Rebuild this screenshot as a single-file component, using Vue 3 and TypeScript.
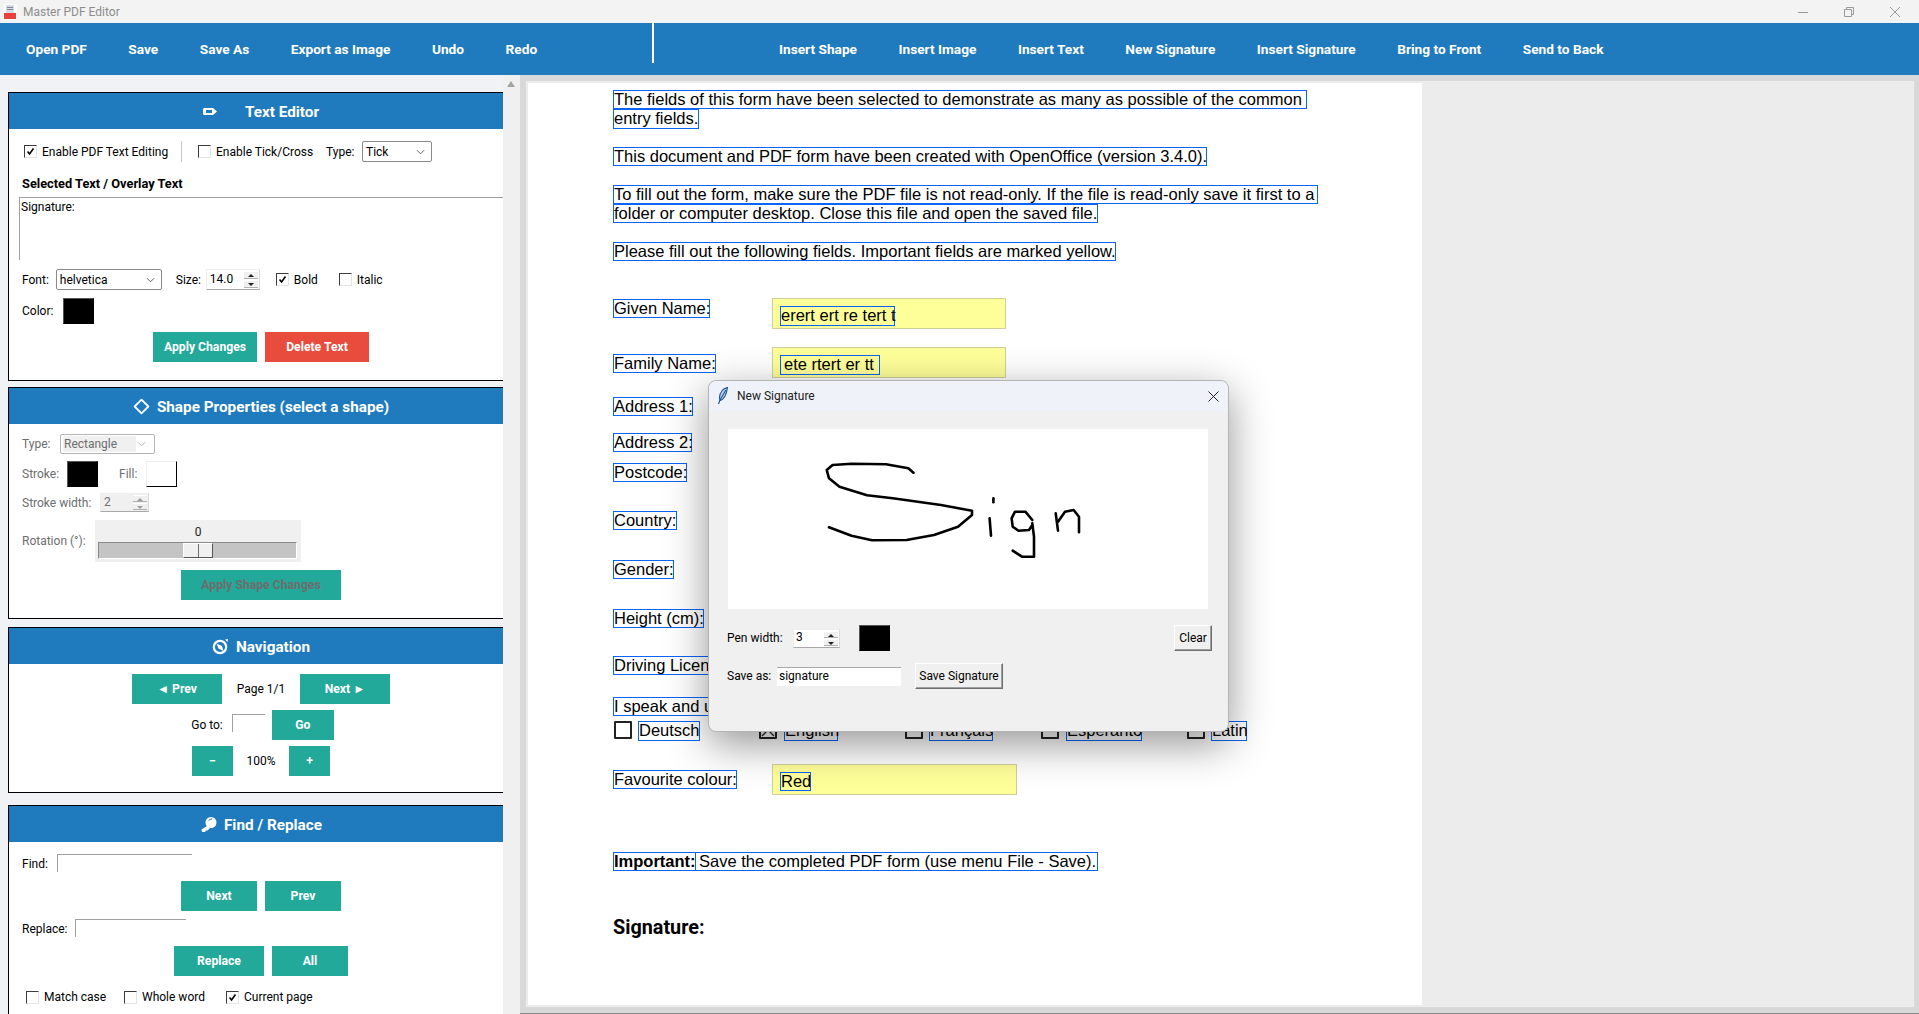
<script setup lang="ts">
interface Box { x: number; y: number; w: number; h: number; text: string; bold?: boolean; pad?: number }
interface Rect { x: number; y: number; w: number; h: number; mark?: boolean }

const OX = 528
const OY = 83
const place = (r: { x: number; y: number; w: number; h: number }) => ({
  left: `${r.x - OX}px`,
  top: `${r.y - OY}px`,
  width: `${r.w}px`,
  height: `${r.h}px`,
})

const tools1 = ['Open PDF', 'Save', 'Save As', 'Export as Image', 'Undo', 'Redo']
const tools2 = ['Insert Shape', 'Insert Image', 'Insert Text', 'New Signature', 'Insert Signature', 'Bring to Front', 'Send to Back']

const fields: Rect[] = [
  { x: 772, y: 298, w: 234, h: 31 },
  { x: 772, y: 347, w: 234, h: 31 },
  { x: 772, y: 764, w: 245, h: 31 },
]

const boxes: Box[] = [
  { x: 613, y: 90, w: 694, h: 19, text: 'The fields of this form have been selected to demonstrate as many as possible of the common' },
  { x: 613, y: 109, w: 86, h: 20, text: 'entry fields.' },
  { x: 613, y: 147, w: 594, h: 19, text: 'This document and PDF form have been created with OpenOffice (version 3.4.0).' },
  { x: 613, y: 185, w: 705, h: 19, text: 'To fill out the form, make sure the PDF file is not read-only. If the file is read-only save it first to a' },
  { x: 613, y: 204, w: 485, h: 19, text: 'folder or computer desktop. Close this file and open the saved file.' },
  { x: 613, y: 242, w: 503, h: 19, text: 'Please fill out the following fields. Important fields are marked yellow.' },
  { x: 613, y: 299, w: 97, h: 19, text: 'Given Name:' },
  { x: 780, y: 306, w: 115, h: 20, text: 'erert ert re tert t' },
  { x: 613, y: 354, w: 103, h: 19, text: 'Family Name:' },
  { x: 780, y: 355, w: 100, h: 20, text: 'ete rtert er tt', pad: 3 },
  { x: 613, y: 397, w: 80, h: 19, text: 'Address 1:' },
  { x: 613, y: 433, w: 79, h: 19, text: 'Address 2:' },
  { x: 613, y: 463, w: 74, h: 19, text: 'Postcode:' },
  { x: 613, y: 511, w: 64, h: 19, text: 'Country:' },
  { x: 613, y: 560, w: 61, h: 19, text: 'Gender:' },
  { x: 613, y: 609, w: 91, h: 19, text: 'Height (cm):' },
  { x: 613, y: 656, w: 130, h: 19, text: 'Driving License:' },
  { x: 613, y: 697, w: 360, h: 19, text: 'I speak and understand (tick as many as apply):' },
  { x: 638, y: 721, w: 62, h: 20, text: 'Deutsch' },
  { x: 784, y: 721, w: 54, h: 20, text: 'English' },
  { x: 929, y: 721, w: 64, h: 20, text: 'Français' },
  { x: 1066, y: 721, w: 76, h: 20, text: 'Esperanto' },
  { x: 1211, y: 721, w: 36, h: 20, text: 'Latin' },
  { x: 613, y: 770, w: 124, h: 19, text: 'Favourite colour:' },
  { x: 780, y: 772, w: 31, h: 19, text: 'Red' },
  { x: 613, y: 852, w: 83, h: 19, text: 'Important:', bold: true },
  { x: 695, y: 852, w: 403, h: 19, text: 'Save the completed PDF form (use menu File - Save).', pad: 3 },
]

const pdfChecks: Rect[] = [
  { x: 614, y: 721, w: 18, h: 18 },
  { x: 759, y: 721, w: 18, h: 18, mark: true },
  { x: 905, y: 721, w: 18, h: 18 },
  { x: 1041, y: 721, w: 18, h: 18 },
  { x: 1187, y: 721, w: 18, h: 18 },
]

const strokes = [
  'M185.5 43.7 L180.3 39.3 L158 35.3 L123.5 34.7 L104.6 36 L98.7 41 L101 49.3 L111.5 57.7 L139 66.3 L164.8 69.3 L213 76 L244 81.7 L244 86 L230 97.7 L206 106 L178.6 111 L144 111.3 L123.5 106.7 L101 98.3',
  'M261.6 89.3 L263 106.7',
  'M265.4 69.3 L265.4 73.3',
  'M304.3 91 L297.4 82.7 L287 82.7 L283.6 89.3 L284.7 97.7 L290.5 101.7 L301 101 L304.3 96 M304.3 94.3 L306 107.7 L306 127.7 L294 127.7 L284.7 121.7',
  'M327.7 84.3 L330 101.7 M330 92.7 L337 82.7 L345.6 81 L351 87.7 L351 103.3',
]
</script>

<template>
  <div class="app">
    <header class="titlebar">
      <svg class="appicon" viewBox="0 0 14 16" width="14" height="16">
        <rect x="0" y="0" width="14" height="16" fill="#fbfbfb" />
        <rect x="3" y="1" width="8" height="8" fill="#d8dbe2" />
        <rect x="4" y="3" width="6" height="1" fill="#7d8594" />
        <rect x="4" y="5" width="6" height="1" fill="#7d8594" />
        <rect x="1" y="9" width="12" height="6" fill="#e8413a" />
      </svg>
      <span class="apptitle">Master PDF Editor</span>
      <div class="winbtns">
        <svg width="10" height="10" viewBox="0 0 10 10"><path d="M0 5.5H10" stroke="#999" fill="none" /></svg>
        <svg width="10" height="10" viewBox="0 0 10 10"><path d="M.5 2.5h7v7h-7zM2.5 2.5v-2h7v7h-2" stroke="#999" fill="none" /></svg>
        <svg width="10" height="10" viewBox="0 0 10 10"><path d="M0 0L10 10M10 0L0 10" stroke="#999" fill="none" /></svg>
      </div>
    </header>

    <nav class="toolbar">
      <div class="toolgroup first">
        <span v-for="t in tools1" :key="t">{{ t }}</span>
      </div>
      <i class="toolsep"></i>
      <div class="toolgroup second">
        <span v-for="t in tools2" :key="t">{{ t }}</span>
      </div>
    </nav>

    <main class="work">
      <aside class="side">
        <section class="panel p1">
          <h2 class="phead gap-wide">
            <svg width="14" height="7" viewBox="0 0 14 7"><path d="M1 0H10L14 3.5L10 7H1L0 6V1Z" fill="#fff" /><rect x="3" y="2" width="6" height="3" fill="#1f7bbd" /></svg>
            <span>Text Editor</span>
          </h2>
          <div class="row r1">
            <span class="cb"><svg viewBox="0 0 13 13"><path d="M3 6.5L5.4 9.5L10 3" /></svg></span>
            <span class="ml5 wlab1">Enable PDF Text Editing</span>
            <i class="vsep"></i>
            <span class="cb ml16"></span>
            <span class="ml5 wlab2">Enable Tick/Cross</span>
            <span class="ml16b">Type:</span>
            <span class="combo w70"><span>Tick</span><svg viewBox="0 0 10 6"><path d="M1 1L5 5L9 1" /></svg></span>
          </div>
          <div class="seltitle">Selected Text / Overlay Text</div>
          <div class="textarea">Signature:</div>
          <div class="row r3">
            <span class="lab22">Font:</span>
            <span class="combo w106 font"><span>helvetica</span><svg viewBox="0 0 10 6"><path d="M1 1L5 5L9 1" /></svg></span>
            <span class="sizelab">Size:</span>
            <span class="spin w54">
              <span>14.0</span>
              <span class="arrows"><b class="up"></b><b class="dn"></b></span>
            </span>
            <span class="cb bold"><svg viewBox="0 0 13 13"><path d="M3 6.5L5.4 9.5L10 3" /></svg></span>
            <span class="ml5 wbold">Bold</span>
            <span class="cb"></span>
            <span class="ml5">Italic</span>
          </div>
          <div class="row r4">
            <span class="lab22 wcolor">Color:</span>
            <span class="swatch"></span>
          </div>
          <div class="btnrow r5">
            <button class="btn w104">Apply Changes</button>
            <button class="btn red w104">Delete Text</button>
          </div>
        </section>

        <section class="panel p2">
          <h2 class="phead">
            <svg width="17" height="17" viewBox="0 0 17 17"><path d="M8.5 1.6L15.4 8.5L8.5 15.4L1.6 8.5Z" fill="none" stroke="#fff" stroke-width="1.8" stroke-linejoin="round" /></svg>
            <span>Shape Properties (select a shape)</span>
          </h2>
          <div class="row dis rt">
            <span class="lab22 wt">Type:</span>
            <span class="combo w95 disabled"><span class="dval">Rectangle</span><svg viewBox="0 0 10 6"><path d="M1 1L5 5L9 1" /></svg></span>
          </div>
          <div class="row dis rs">
            <span class="lab22 wst">Stroke:</span>
            <span class="swatch"></span>
            <span class="filllab">Fill:</span>
            <span class="swatch white"></span>
          </div>
          <div class="row dis rw">
            <span class="lab22 wsw">Stroke width:</span>
            <span class="spin w49 disabled">
              <span>2</span>
              <span class="arrows"><b class="up"></b><b class="dn"></b></span>
            </span>
          </div>
          <div class="row dis rr">
            <span class="lab22 wrot">Rotation (°):</span>
            <div class="scale">
              <span class="scaleval">0</span>
              <div class="trough"><i class="thumb"></i></div>
            </div>
          </div>
          <div class="btnrow r6">
            <button class="btn w160 disbtn">Apply Shape Changes</button>
          </div>
        </section>

        <section class="panel p3">
          <h2 class="phead">
            <svg width="17" height="17" viewBox="0 0 17 17">
              <circle cx="8" cy="9" r="6.2" fill="none" stroke="#fff" stroke-width="2.2" />
              <path d="M4.5 5.5L10 8L11.5 13L6.5 10.5Z" fill="#fff" />
              <path d="M13 1.5L16 1L15.5 4Z" fill="#fff" />
            </svg>
            <span>Navigation</span>
          </h2>
          <div class="btnrow n1">
            <button class="btn w90">◄ Prev</button>
            <span class="pagelab">Page 1/1</span>
            <button class="btn w90">Next ►</button>
          </div>
          <div class="btnrow n2 goto">
            <span>Go to:</span>
            <span class="entry e33"></span>
            <button class="btn w62">Go</button>
          </div>
          <div class="btnrow n2">
            <button class="btn w41">−</button>
            <span class="zoomlab">100%</span>
            <button class="btn w41">+</button>
          </div>
        </section>

        <section class="panel p4">
          <h2 class="phead">
            <svg width="17" height="15" viewBox="0 0 17 15">
              <circle cx="11" cy="5.5" r="5.5" fill="#fff" />
              <path d="M7 9L1.5 12.5L2 15H5L6 13.5H7.5L10 11Z" fill="#fff" />
              <path d="M8.5 3.5Q10 1.8 12 2" stroke="#1f7bbd" stroke-width="1" fill="none" />
            </svg>
            <span>Find / Replace</span>
          </h2>
          <div class="row f1">
            <span class="lab22 wfind">Find:</span>
            <span class="entry e135"></span>
          </div>
          <div class="btnrow f2">
            <button class="btn w76">Next</button>
            <button class="btn w76">Prev</button>
          </div>
          <div class="row f3">
            <span class="lab22 wrep">Replace:</span>
            <span class="entry e111"></span>
          </div>
          <div class="btnrow f2">
            <button class="btn w90">Replace</button>
            <button class="btn w76">All</button>
          </div>
          <div class="row f5">
            <span class="cb"></span>
            <span class="ml5 wmc">Match case</span>
            <span class="cb"></span>
            <span class="ml5 wmw">Whole word</span>
            <span class="cb"><svg viewBox="0 0 13 13"><path d="M3 6.5L5.4 9.5L10 3" /></svg></span>
            <span class="ml5">Current page</span>
          </div>
        </section>
      </aside>

      <div class="vscroll"><i class="uparrow"></i></div>

      <div class="viewport">
        <div class="frame">
          <div class="page">
            <div v-for="(f, i) in fields" :key="'f' + i" class="pfield" :style="place(f)"></div>
            <div v-for="(c, i) in pdfChecks" :key="'c' + i" class="pcheck" :style="place(c)">
              <svg v-if="c.mark" viewBox="0 0 14 14"><path d="M1 1L13 13M13 1L1 13" /></svg>
            </div>
            <div
              v-for="b in boxes"
              :key="b.text"
              class="tbox"
              :class="{ strong: b.bold }"
              :style="{ ...place(b), paddingLeft: `${b.pad ?? 0}px` }"
            >{{ b.text }}</div>
            <div class="psign">Signature:</div>
          </div>
        </div>
      </div>
    </main>

    <div class="dialog">
      <div class="dtitle">
        <svg width="12" height="18" viewBox="0 0 12 18">
          <path d="M10.5 .5C6 1.5 3 5.5 2.5 10.5L3 13.5C7 12.5 9.5 8 10.5 .5Z" fill="#bcd3ef" stroke="#1d4f8f" stroke-width="1.1" />
          <path d="M9 3L3 13L1.5 17" fill="none" stroke="#1d4f8f" stroke-width="1.1" />
        </svg>
        <span class="dname">New Signature</span>
        <svg class="dclose" width="11" height="11" viewBox="0 0 11 11"><path d="M.5 .5L10.5 10.5M10.5 .5L.5 10.5" stroke="#222" stroke-width="1" fill="none" /></svg>
      </div>
      <div class="sigpad">
        <svg width="480" height="180" viewBox="0 0 480 180">
          <path v-for="(d, i) in strokes" :key="i" :d="d" fill="none" stroke="#000" stroke-width="2.6" stroke-linejoin="round" stroke-linecap="round" />
        </svg>
      </div>
      <div class="drow d1">
        <span class="wpen">Pen width:</span>
        <span class="spin w47 dspin">
          <span>3</span>
          <span class="arrows"><b class="up"></b><b class="dn"></b></span>
        </span>
        <span class="swatch dsw"></span>
        <button class="tkbtn clear">Clear</button>
      </div>
      <div class="drow d2">
        <span class="wsave">Save as:</span>
        <span class="dentry">signature</span>
        <button class="tkbtn save">Save Signature</button>
      </div>
    </div>
  </div>
</template>

<style scoped>
.app {
  position: relative;
  width: 1919px;
  height: 1014px;
  overflow: hidden;
  display: flex;
  flex-direction: column;
  font-family: Roboto, "Liberation Sans", sans-serif;
  font-size: 12px;
  color: #000;
  background: #f0f2f6;
}

.titlebar {
  height: 23px;
  flex: none;
  display: flex;
  align-items: center;
  background: #f3f3f3;
  padding-left: 3px;
}
.appicon { flex: none; }
.apptitle { margin-left: 6px; color: #8c8c8c; font-size: 12px; }
.winbtns {
  margin-left: auto;
  display: flex;
  gap: 36px;
  padding-right: 19px;
  align-items: center;
}

.toolbar {
  height: 52px;
  flex: none;
  display: flex;
  align-items: center;
  background: #1f7bbd;
  color: #fff;
  font-weight: 700;
  font-size: 13.7px;
}
.toolgroup { display: flex; white-space: nowrap; }
.toolgroup.first { gap: 41.5px; margin-left: 26px; width: 626px; }
.toolsep { width: 2px; height: 40px; background: #fff; margin-top: -12px; align-self: center; }
.toolgroup.second { gap: 41.5px; margin-left: 125px; }

.work { flex: 1; display: flex; min-height: 0; }

.side {
  width: 503px;
  flex: none;
  overflow: hidden;
  padding: 17px 0 0 8px;
  box-sizing: border-box;
}
.panel {
  width: 506px;
  box-sizing: border-box;
  border: 1px solid #000;
  background: #fff;
}
.p1 { height: 289px; }
.p2 { height: 232px; margin-top: 6px; }
.p3 { height: 166px; margin-top: 8px; }
.p4 { height: 240px; margin-top: 12px; }

.phead {
  margin: 0;
  height: 36px;
  display: flex;
  align-items: center;
  justify-content: center;
  gap: 7px;
  background: #1f7bbd;
  color: #fff;
  font-size: 15.3px;
  font-weight: 700;
  padding-top: 1px;
  box-sizing: border-box;
}
.gap-wide { gap: 28px; }

.row { display: flex; align-items: center; padding-left: 13px; white-space: nowrap; }
.btnrow { display: flex; align-items: center; justify-content: center; white-space: nowrap; }
.row > span { flex: none; }

.cb {
  width: 13px;
  height: 13px;
  box-sizing: border-box;
  flex: none;
  border: 1px solid;
  border-color: #3c3c3c #e4e4e4 #e4e4e4 #3c3c3c;
  background: #fff;
  display: block;
}
.cb svg { display: block; width: 11px; height: 11px; }
.cb svg path { fill: none; stroke: #000; stroke-width: 1.9; }
.ml5 { margin-left: 5px; }

.r1 { margin-top: 12px; height: 21px; padding-left: 15px; }
.wlab1 { width: 124px; }
.vsep { width: 1px; height: 21px; background: #c8c8c8; margin-left: 15px; flex: none; }
.ml16 { margin-left: 16px; }
.wlab2 { width: 94px; }
.ml16b { margin-left: 16px; width: 36px; }

.combo {
  box-sizing: border-box;
  display: flex;
  align-items: center;
  justify-content: space-between;
  height: 21px;
  padding: 0 6px 0 3px;
  background: #fff;
  border: 1px solid #8a8a8a;
  border-radius: 2px;
  flex: none;
}
.combo svg { width: 9px; height: 6px; }
.combo svg path { fill: none; stroke: #555; stroke-width: 1; }
.combo.disabled {
  border-color: #b5b5b5;
  height: 20px;
  padding: 1px 8px 1px 2px;
}
.dval { background: #f0f0f0; align-self: stretch; display: flex; align-items: center; width: 72px; padding-left: 1px; }
.combo.disabled svg path { stroke: #aaa; }
.w70 { width: 70px; }
.w106 { width: 106px; }
.w95 { width: 95px; }

.seltitle { margin: 12px 0 0 13px; height: 18px; line-height: 20px; font-weight: 700; font-size: 12.8px; }
.textarea {
  margin: 5px 0 0 10px;
  height: 63px;
  border-top: 1px solid #a0a0a0;
  border-left: 1px solid #a0a0a0;
  box-sizing: border-box;
  padding: 2px 0 0 1px;
}

.r3 { margin-top: 9px; height: 21px; }
.lab22 { flex: none; }
.font { margin-left: 7px; }
.sizelab { margin-left: 14px; width: 30px; }
.spin {
  position: relative;
  box-sizing: border-box;
  height: 21px;
  display: flex;
  align-items: center;
  padding: 0 0 2px 3px;
  background: #fff;
  border-right: 1px solid #d8d8d8;
  border-bottom: 1px solid #a8a8a8;
  border-top: 1px solid #eee;
  border-left: 1px solid #eee;
  flex: none;
}
.w54 { width: 54px; }
.w49 { width: 49px; height: 19px; }
.w47 { width: 47px; height: 19px; }
.spin.disabled { background: #f0f0f0; }
.arrows {
  position: absolute;
  right: 1px;
  top: 1px;
  bottom: 1px;
  width: 14px;
  display: flex;
  flex-direction: column;
  gap: 1px;
}
.arrows b {
  flex: 1;
  position: relative;
  background: #f0f0f0;
  border-bottom: 1px solid #b0b0b0;
  border-top: 1px solid #fff;
}
.arrows b::after {
  content: "";
  position: absolute;
  left: 4px;
  top: 2px;
  border-left: 3px solid transparent;
  border-right: 3px solid transparent;
}
.arrows .up::after { border-bottom: 3px solid #222; }
.arrows .dn::after { border-top: 3px solid #222; }
.disabled .arrows .up::after { border-bottom-color: #9b9b9b; }
.disabled .arrows .dn::after { border-top-color: #9b9b9b; }

.bold { margin-left: 16px; }
.wbold { width: 45px; }

.r4 { margin-top: 8px; height: 26px; }
.wcolor { width: 41px; }
.swatch {
  display: block;
  width: 31px;
  height: 26px;
  box-sizing: border-box;
  flex: none;
  background: #000;
  border: 1px solid;
  border-color: #555 #000 #000 #555;
}
.swatch.white { background: #fff; border-color: #eee #000 #000 #eee; }

.btn {
  height: 30px;
  border: 0;
  padding: 0;
  margin: 0;
  background: #22a99a;
  color: #fff;
  font: 700 12.2px Roboto, "Liberation Sans", sans-serif;
  flex: none;
}
.red { background: #e74c3c; }
.w104 { width: 104px; }
.w160 { width: 160px; }
.w90 { width: 90px; }
.w62 { width: 62px; }
.w41 { width: 41px; }
.w76 { width: 76px; }
.r5 { margin-top: 8px; gap: 8px; }

.dis { color: #6d6d6d; }
.rt { margin-top: 10px; height: 20px; }
.wt { width: 38px; }
.rs { margin-top: 7px; height: 26px; }
.wst { width: 45px; }
.filllab { margin-left: 21px; width: 27px; }
.rw { margin-top: 6px; height: 19px; }
.wsw { width: 78px; }
.rr { margin-top: 8px; height: 42px; }
.wrot { width: 73px; }
.scale {
  width: 206px;
  height: 42px;
  box-sizing: border-box;
  background: #f0f0f0;
  padding-top: 3px;
  text-align: center;
  color: #222;
}
.scaleval { display: block; height: 19px; line-height: 18px; }
.trough {
  position: relative;
  margin-left: 3px;
  width: 199px;
  height: 17px;
  box-sizing: border-box;
  background: #c4c4c4;
  border: 1px solid;
  border-color: #8a8a8a #fff #fff #8a8a8a;
}
.thumb {
  position: absolute;
  left: 84px;
  top: 0;
  width: 30px;
  height: 15px;
  box-sizing: border-box;
  background: linear-gradient(#6f6f6f, #6f6f6f) center / 1px 100% no-repeat, #f0f0f0;
  border: 1px solid;
  border-color: #fff #555 #555 #fff;
}
.r6 { margin-top: 8px; }
.disbtn { color: #6d6d6d; }

.n1 { margin-top: 10px; }
.pagelab { width: 78px; text-align: center; }
.n2 { margin-top: 6px; }
.goto { padding-left: 3px; }
.zoomlab { width: 56px; text-align: center; }
.entry {
  display: block;
  height: 18px;
  box-sizing: border-box;
  border-top: 1px solid #a0a0a0;
  border-left: 1px solid #a0a0a0;
  flex: none;
}
.e33 { width: 33px; margin: -5px 7px 0 9px; }
.e135 { width: 135px; margin-top: -2px; }
.e111 { width: 111px; margin-top: -2px; }
.f1 { margin-top: 13px; height: 18px; }
.wfind { width: 35px; }
.f2 { margin-top: 8px; gap: 8px; }
.f3 { margin-top: 9px; height: 18px; }
.wrep { width: 53px; }
.f5 { margin-top: 12px; height: 18px; padding-left: 17px; }
.wmc { width: 80px; }
.wmw { width: 84px; }

.vscroll {
  width: 17px;
  flex: none;
  background: #f0f0f0;
  position: relative;
}
.uparrow {
  position: absolute;
  left: 4px;
  top: 6px;
  border-left: 4px solid transparent;
  border-right: 4px solid transparent;
  border-bottom: 6px solid #a3a3a3;
}

.viewport {
  flex: 1;
  min-width: 0;
  box-sizing: border-box;
  background: #d9d9d9;
  padding: 6px 5px 6px 6px;
  border-bottom: 1px solid #8a8a8a;
}
.frame {
  height: 926px;
  box-sizing: border-box;
  background: #ececec;
  padding: 2px 0 2px 2px;
}
.page {
  position: relative;
  width: 894px;
  height: 922px;
  background: #fff;
  font-family: "Liberation Sans", Arial, sans-serif;
  font-size: 16.5px;
}
.pfield {
  position: absolute;
  box-sizing: border-box;
  background: #ffff99;
  border: 1px solid #cfcf9e;
}
.pcheck {
  position: absolute;
  box-sizing: border-box;
  border: 2px solid #222;
  border-radius: 1px;
  background: #fff;
}
.pcheck svg { display: block; width: 100%; height: 100%; }
.pcheck svg path { stroke: #222; stroke-width: 1.3; fill: none; }
.tbox {
  position: absolute;
  box-sizing: border-box;
  border: 1px solid #0a64f5;
  line-height: 17px;
  white-space: nowrap;
}
.strong { font-weight: 700; }
.psign {
  position: absolute;
  left: 85px;
  top: 833px;
  font: 700 19.8px/24px Roboto, "Liberation Sans", sans-serif;
  color: #000;
}

.dialog {
  position: absolute;
  left: 708px;
  top: 380px;
  width: 521px;
  height: 352px;
  box-sizing: border-box;
  background: #f0f0f0;
  border: 1px solid #b4b4b4;
  border-radius: 8px;
  box-shadow: 0 12px 42px rgba(0, 0, 0, 0.42);
}
.dtitle {
  height: 30px;
  display: flex;
  align-items: center;
  padding-left: 8px;
  background: #eff3f9;
  border-radius: 8px 8px 0 0;
}
.dname { margin-left: 8px; color: #222; }
.dclose { margin-left: auto; margin-right: 9px; }
.sigpad {
  margin: 18px 0 0 19px;
  width: 480px;
  height: 180px;
  background: #fff;
}
.sigpad svg { display: block; }
.drow { display: flex; align-items: center; padding-left: 18px; height: 26px; position: relative; }
.d1 { margin-top: 16px; }
.d2 { margin-top: 12px; }
.wpen { width: 66px; }
.dspin { padding-left: 2px; }
.dsw { margin-left: 19px; }
.tkbtn {
  box-sizing: border-box;
  height: 26px;
  padding: 0;
  background: #f0f0f0;
  font: 12px Roboto, "Liberation Sans", sans-serif;
  color: #000;
  border: 1px solid;
  border-color: #fff #6e6e6e #6e6e6e #fff;
  box-shadow: inset -1px -1px 0 #a0a0a0;
}
.clear { width: 38px; margin-left: auto; margin-right: 16px; }
.wsave { width: 50px; }
.dentry {
  box-sizing: border-box;
  width: 124px;
  height: 19px;
  background: #fff;
  border-top: 1px solid #a8a8a8;
  padding-left: 2px;
  line-height: 17px;
}
.save { width: 88px; margin-left: 14px; }
</style>

<style>
html, body { margin: 0; overflow: hidden; }
</style>
